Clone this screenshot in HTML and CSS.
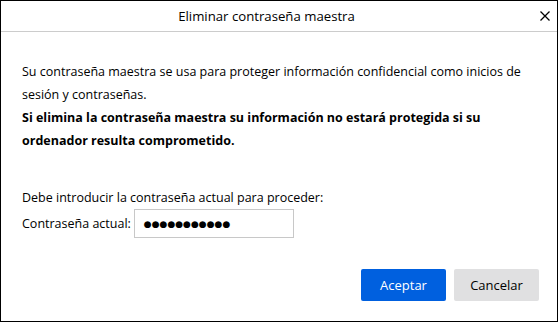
FILE: index.html
```html
<!DOCTYPE html>
<html lang="es">
<head>
<meta charset="utf-8">
<link rel="stylesheet" href="styles.css">
</head>
<body>
<div class="dialog">
  <header class="titlebar">
    <span class="title">Eliminar contraseña maestra</span>
    <svg class="close" width="10" height="10" viewBox="0 0 10 10"><path d="M0.5 0.5 L9.5 9.5 M9.5 0.5 L0.5 9.5" stroke="#000" stroke-width="1.3" fill="none"/></svg>
  </header>
  <main class="content">
    <p class="desc">Su contraseña maestra se usa para proteger información confidencial como inicios de sesión y contraseñas.</p>
    <p class="warn">Si elimina la contraseña maestra su información no estará protegida si su ordenador resulta comprometido.</p>
    <p class="prompt">Debe introducir la contraseña actual para proceder:</p>
    <div class="field">
      <label class="label">Contraseña actual:</label>
      <div class="input"><span class="dots">●●●●●●●●●●●</span></div>
    </div>
  </main>
  <footer class="buttons">
    <button class="btn primary">Aceptar</button>
    <button class="btn secondary">Cancelar</button>
  </footer>
</div>
</body>
</html>
```
FILE: styles.css
```css
html, body { margin: 0; padding: 0; }
body {
  width: 558px;
  height: 322px;
  background: #fff;
  font-family: "Open Sans", "Noto Sans", sans-serif;
  color: #000;
}
.dialog {
  box-sizing: border-box;
  width: 558px;
  height: 322px;
  border: 1px solid #000;
  display: flex;
  flex-direction: column;
}
.titlebar {
  height: 30px;
  border-bottom: 1px solid #ccc;
  display: flex;
  align-items: center;
  justify-content: center;
  padding-right: 25px;
  position: relative;
}
.title { font-size: 13.2px; color: #000; }
.close { position: absolute; right: 7px; top: 10px; }
.content {
  padding: 28px 21px 0 21px;
  font-size: 12.5px;
  flex: 1;
}
.content p { margin: 0; line-height: 23px; }
.warn { font-weight: bold; }
.prompt { margin-top: 34px !important; }
.field { display: flex; align-items: center; gap: 3px; }
.input {
  box-sizing: border-box;
  width: 160px;
  height: 29px;
  border: 1px solid #c8c8c8;
  display: flex;
  align-items: center;
  padding-left: 9px;
}
.dots { font-size: 9px; letter-spacing: 0; font-family: "DejaVu Sans", sans-serif; }
.buttons {
  display: flex;
  justify-content: flex-end;
  gap: 8px;
  padding: 0 18px 20px 0;
}
.btn {
  width: 85px;
  height: 32px;
  border: none;
  border-radius: 2px;
  font-family: "Open Sans", "Noto Sans", sans-serif;
  font-size: 13px;
}
.primary { background: #0060df; color: #fff; }
.secondary { background: #e0e0e1; color: #000; }
```
